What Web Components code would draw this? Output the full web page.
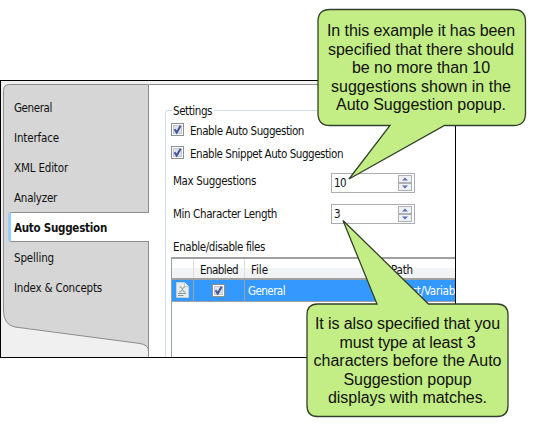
<!DOCTYPE html>
<html lang="en">
<head>
<meta charset="utf-8">
<title>Auto Suggestion options</title>
<style>
html,body{margin:0;background:#fff;overflow:hidden}
body{width:535px;height:427px;position:relative}
</style>
</head>
<body>
<options-window></options-window>
<call-out style="left:310px;top:4px;--pad:18px" w="225" h="184" shape="M20 5.5H203.5Q215.5 5.5 215.5 17.5V109.5Q215.5 121.5 203.5 121.5H134.5L39 175L80 121.5H20Q8 121.5 8 109.5V17.5Q8 5.5 20 5.5Z" lines="In this example it has been,188|specified that there should,186|be no more than 10,138|suggestions shown in the,180|Auto Suggestion popup.,170"></call-out>
<call-out style="left:299px;top:216px;--pad:99px" w="217" h="208" shape="M18.5 88H78L44 4.5L129.5 88H198Q209 88 209 99V189.5Q209 200.5 198 200.5H18.5Q8 200.5 8 189.5V99Q8 88 18.5 88Z" lines="It is also specified that you,185|must type at least 3,136|characters before the Auto,188|Suggestion popup,128|displays with matches.,159"></call-out>
<script>
// Text run whose tracking is tuned so it spans the width in its "w" attribute.
class FitText extends HTMLElement{
  connectedCallback(){
    this.attachShadow({mode:'open'}).innerHTML='<style>:host{display:inline-block;white-space:pre;height:16px;line-height:18px}span{display:inline-block}</style><span></span>';
    const s=this.shadowRoot.querySelector('span'),t=this.getAttribute('text'),w=+this.getAttribute('w');
    s.textContent=t;
    if(w){const n=s.getBoundingClientRect().width;s.style.letterSpacing=((w-n)/t.length)+'px';}
  }
}
customElements.define('fit-text',FitText);

class CheckBox extends HTMLElement{
  connectedCallback(){
    this.attachShadow({mode:'open'}).innerHTML=`<style>:host{display:block;width:13px;height:13px}svg{display:block}</style>
<svg width="13" height="13"><rect x=".5" y=".5" width="12" height="12" fill="#fff" stroke="#8e8f8f"/><rect x="2.5" y="2.5" width="8" height="8" fill="#dfe2e8" stroke="#c3c7d0"/><path d="M3.6 6.2L5.7 9.5L9.6 2.8" fill="none" stroke="#40549c" stroke-width="2"/></svg>`;
  }
}
customElements.define('check-box',CheckBox);

class SpinBox extends HTMLElement{
  connectedCallback(){
    this.attachShadow({mode:'open'}).innerHTML=`<style>
:host{display:flex;box-sizing:border-box;width:84px;height:20px;border:1px solid #abadb3;background:#fff;justify-content:space-between;padding:1px}
fit-text{line-height:16px;padding-left:1px}
svg{display:block}</style>
<fit-text text="${this.getAttribute('value')}" w="${this.getAttribute('w')}"></fit-text>
<svg width="15" height="16"><g fill="#f1f1f3" stroke="#aeb0b8"><rect x=".5" y=".5" width="13" height="7"/><rect x=".5" y="8.5" width="13" height="7"/></g><path d="M4 5.500H10L7 2.500ZM4 10.500H10L7 13.500Z" fill="#5570b8"/></svg>`;
  }
}
customElements.define('spin-box',SpinBox);

class SideNav extends HTMLElement{
  connectedCallback(){
    const items=[['General',38],['Interface',45],['XML Editor',54],['Analyzer',43],['Auto Suggestion',93,1],['Spelling',40],['Index & Concepts',88]];
    this.attachShadow({mode:'open'}).innerHTML=`<style>
:host{display:grid;width:148px;height:276px}
svg,nav{grid-area:1/1}
nav{display:flex;flex-direction:column;padding-top:11px;z-index:1}
div{box-sizing:border-box;height:30px;padding:7px 0 0 13px}
.on{font-weight:bold;padding:6px 0 0 3px;margin-left:7px;background:#fff;border:1px solid #8c8c8c;border-right:0;border-left:3px solid #99ccff;border-radius:3px 0 0 3px}
</style>
<svg width="148" height="276"><rect width="148" height="276" fill="#f0f0f0"/><path d="M147.500 276V270Q147.500 264 139 262.500L14 246Q2.500 244 2.500 229V9.500Q2.500 3.500 8.500 3.500H147.500Z" fill="#d6d6d6" stroke="#8c8c8c"/></svg>
<nav>${items.map(i=>`<div class="${i[2]?'on':''}"><fit-text text="${i[0].replace('&','&amp;')}" w="${i[1]}"></fit-text></div>`).join('')}</nav>`;
  }
}
customElements.define('side-nav',SideNav);

class FileTable extends HTMLElement{
  connectedCallback(){
    this.attachShadow({mode:'open'}).innerHTML=`<style>
:host{display:block;box-sizing:border-box;width:284px;height:110px;border-left:1px solid #a0a0a0;border-top:2px solid #a0a0a0;overflow:hidden}
.r{display:grid;grid-template-columns:22px 51px 139px 71px;box-sizing:border-box}
.h{height:19px;background:linear-gradient(#fff 0 45%,#f3f4f6 46%,#f1f2f4)}
.h>*{border-right:1px solid #dcdee2;padding-top:2px;box-sizing:border-box}
.b{height:24px;background:#3399ff;color:#fff;border-top:2px solid #a0a0a0;border-bottom:1px solid #a0a0a0}
.b>*{border-right:1px solid #a0a0a0;box-sizing:border-box}
.r>:last-child{border-right:0}
.b .f{padding:2px 0 0 3px}
.c{padding:4px 0 0 18px}
svg{display:block}
.i{padding:2px 0 0 4px}
</style>
<div class="r h"><div></div><div style="padding-left:6px"><fit-text text="Enabled" w="38"></fit-text></div><div style="padding-left:6px"><fit-text text="File" w="17"></fit-text></div><div style="padding-left:7px"><fit-text text="Path" w="22"></fit-text></div></div>
<div class="r b"><div class="i"><svg width="13" height="17"><path d="M.5.500H8.500L12.500 4.500V15.500H.5Z" fill="#e9eeeb" stroke="#c3cfd0"/><path d="M8.500.500V4.500H12.500" fill="#fff" stroke="#b9c9cb"/><path d="M3.500 5H5L8 10H9.500M9 5H8L4.500 10H3M2 11.500H10M2 13.500H7.500" stroke="#899b9b" fill="none"/></svg></div><div class="c"><check-box></check-box></div><div class="f"><fit-text text="General" w="37"></fit-text></div><div class="f"><fit-text text="Project/Variab" w="68"></fit-text></div></div>`;
  }
}
customElements.define('file-table',FileTable);

class OptionsWindow extends HTMLElement{
  connectedCallback(){
    this.attachShadow({mode:'open'}).innerHTML=`<style>
:host{display:block;padding-top:80px;font:11.5px/16px "DejaVu Sans Condensed","DejaVu Sans",sans-serif;color:#111}
.w{box-sizing:border-box;width:456px;height:278px;border:1px solid #000;display:flex;background:#fff}
main{flex:1;min-width:0;border-top:3px solid #f4f4f4;display:flex}
.m{flex:1;min-width:0;border-top:1px solid #8c8c8c;padding:17px 0 0 16px;overflow:hidden}
.title{display:flex;align-items:center;height:16px}
.title i{width:7px;height:8px;align-self:flex-end;box-sizing:border-box;border:1px solid #d0dfe8;border-width:1px 0 0 1px;border-radius:3px 0 0}
.title b{flex:1;height:1px;background:#d0dfe8;margin-left:2px}
.g{border-left:1px solid #d0dfe8;height:239px;padding-left:5px}
.c{display:flex;gap:6px;height:23px;align-items:flex-start}
.c check-box{margin-top:1px}
.f{display:flex;height:31px;padding-top:5px;box-sizing:border-box}
.f fit-text{width:158px;padding-left:2px}
</style>
<div class="w"><side-nav></side-nav><main><div class="m"><div class="title"><i></i><fit-text text="Settings" w="39" style="padding-left:1px"></fit-text><b></b></div>
<div class="g"><div style="height:4px"></div>
<div class="c"><check-box></check-box><fit-text text="Enable Auto Suggestion" w="114"></fit-text></div>
<div class="c"><check-box></check-box><fit-text text="Enable Snippet Auto Suggestion" w="153"></fit-text></div>
<div class="f"><fit-text text="Max Suggestions" w="83" style="margin-top:-1px"></fit-text><spin-box value="10" w="12"></spin-box></div>
<div class="f" style="height:39px"><fit-text text="Min Character Length" w="104" style="margin-top:1px"></fit-text><spin-box value="3" w="6"></spin-box></div>
<fit-text text="Enable/disable files" w="92" style="padding-left:2px;display:block;height:19px"></fit-text>
<file-table></file-table></div></div></main></div>`;
  }
}
customElements.define('options-window',OptionsWindow);

class CallOut extends HTMLElement{
  connectedCallback(){
    const w=this.getAttribute('w'),h=this.getAttribute('h');
    this.attachShadow({mode:'open'}).innerHTML=`<style>
:host{position:absolute;display:grid;width:${w}px;height:${h}px;font:16px "Liberation Sans",Arial,sans-serif;color:#111}
svg,.t{grid-area:1/1}
.t{padding-top:var(--pad);display:flex;flex-direction:column;align-items:center;padding-right:${w==225?3:0}px}
.t div{height:18.5px;display:flex}
.t fit-text{line-height:18px;height:18px}
</style><svg width="${w}" height="${h}"><path d="${this.getAttribute('shape')}" fill="#c3ee85" stroke="#33402a" stroke-width="1.300"/></svg>
<div class="t">${this.getAttribute('lines').split('|').map(l=>{const [t,n]=l.split(',');return `<div><fit-text text="${t}" w="${n}"></fit-text></div>`}).join('')}</div>`;
  }
}
customElements.define('call-out',CallOut);
</script>
</body>
</html>
